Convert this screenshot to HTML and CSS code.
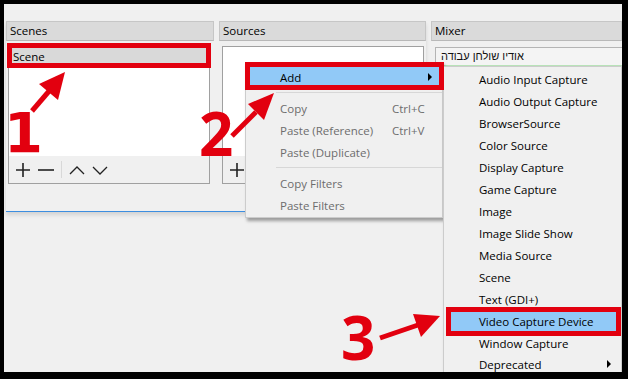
FILE: index.html
```html
<!DOCTYPE html>
<html lang="en">
<head>
    <meta charset="UTF-8">
    <title>OBS - Add Video Capture Device</title>
    <link rel="stylesheet" href="styles.css">
</head>
<body>
<div class="screen">
  <div class="window">
    <div class="docks">
      <div class="left-docks">
        <div class="dock dock-scenes">
          <div class="dock-title">Scenes</div>
          <div class="list">
            <div class="list-body">
              <div class="list-item selected">Scene</div>
            </div>
            <div class="toolbar">
              <svg class="tool" width="16" height="16" viewBox="0 0 16 16"><path d="M8 1v14M1 8h14" stroke="#222" stroke-width="1.6"/></svg>
              <svg class="tool" width="16" height="16" viewBox="0 0 16 16"><path d="M0 8h16" stroke="#222" stroke-width="1.6"/></svg>
              <span class="tool-sep"></span>
              <svg class="tool" width="16" height="16" viewBox="0 0 16 16"><path d="M1 12l7-7 7 7" fill="none" stroke="#222" stroke-width="1.3"/></svg>
              <svg class="tool" width="16" height="16" viewBox="0 0 16 16"><path d="M1 5l7 7 7-7" fill="none" stroke="#222" stroke-width="1.3"/></svg>
            </div>
          </div>
        </div>
        <div class="dock dock-sources">
          <div class="dock-title">Sources</div>
          <div class="list">
            <div class="list-body"></div>
            <div class="toolbar">
              <svg class="tool" width="16" height="16" viewBox="0 0 16 16"><path d="M8 1v14M1 8h14" stroke="#222" stroke-width="1.6"/></svg>
            </div>
          </div>
        </div>
      </div>
      <div class="dock dock-mixer">
        <div class="dock-title">Mixer</div>
        <div class="mixer-channel">
          <div class="mixer-name" dir="rtl">אודיו שולחן עבודה</div>
        </div>
      </div>
    </div>

    <div class="menu context-menu">
      <div class="menu-item active"><span>Add</span><span class="sub-arrow"></span></div>
      <div class="menu-sep"></div>
      <div class="menu-item disabled"><span>Copy</span><span class="shortcut">Ctrl+C</span></div>
      <div class="menu-item disabled"><span>Paste (Reference)</span><span class="shortcut">Ctrl+V</span></div>
      <div class="menu-item disabled"><span>Paste (Duplicate)</span></div>
      <div class="menu-sep"></div>
      <div class="menu-item disabled"><span>Copy Filters</span></div>
      <div class="menu-item disabled"><span>Paste Filters</span></div>
    </div>

    <div class="menu sub-menu">
      <div class="menu-item"><span>Audio Input Capture</span></div>
      <div class="menu-item"><span>Audio Output Capture</span></div>
      <div class="menu-item"><span>BrowserSource</span></div>
      <div class="menu-item"><span>Color Source</span></div>
      <div class="menu-item"><span>Display Capture</span></div>
      <div class="menu-item"><span>Game Capture</span></div>
      <div class="menu-item"><span>Image</span></div>
      <div class="menu-item"><span>Image Slide Show</span></div>
      <div class="menu-item"><span>Media Source</span></div>
      <div class="menu-item"><span>Scene</span></div>
      <div class="menu-item"><span>Text (GDI+)</span></div>
      <div class="menu-item active"><span>Video Capture Device</span></div>
      <div class="menu-item"><span>Window Capture</span></div>
      <div class="menu-item last"><span>Deprecated</span><span class="sub-arrow"></span></div>
    </div>
  </div>

  <!-- red tutorial marks on top of the screenshot -->
  <svg class="marks" width="628" height="379" viewBox="0 0 628 379">
    <g fill="none" stroke="#e2000f" stroke-width="5">
      <rect x="9.5" y="45.5" width="199" height="20"/>
      <rect x="247.5" y="64.5" width="194" height="23"/>
      <rect x="448.5" y="309.5" width="170" height="24"/>
    </g>
    <g stroke="#e2000f" stroke-width="5" stroke-linecap="butt">
      <line x1="32" y1="111" x2="50" y2="90"/>
      <line x1="232" y1="136" x2="256" y2="112"/>
      <line x1="380" y1="338" x2="418" y2="325"/>
    </g>
    <g fill="#e2000f">
      <polygon points="65,72 58,100 39,84"/>
      <polygon points="274,93 264,120 248,104"/>
      <polygon points="440,316 421,337 413,314"/>
    </g>
  </svg>
  <span class="mark-num num-1">1</span>
  <span class="mark-num num-2">2</span>
  <span class="mark-num num-3">3</span>
</div>
</body>
</html>
```

FILE: styles.css
```css
body {
    margin: 0;
    background-color: #000;
    font-family: "Open Sans", "Noto Sans", sans-serif;
    font-size: 11.5px;
    color: #000;
}
.screen {
    position: relative;
    width: 628px;
    height: 379px;
    background-color: #000;
    padding: 4px 6px 0 4px;
    box-sizing: border-box;
    overflow: hidden;
}
.window {
    position: relative;
    width: 618px;
    height: 368px;
    background-color: #f0f0f0;
    overflow: hidden;
}
.docks {
    display: flex;
    gap: 5px;
    padding: 17px 0 0 2px;
}
.left-docks {
    display: flex;
    gap: 5px;
    height: 190px;
    border-bottom: 1px solid #3d8ee0;
    box-shadow: 0 3px 4px rgba(0, 0, 0, 0.12);
}
.dock-scenes {
    width: 208px;
}
.dock-sources {
    width: 207px;
}
.dock-mixer {
    flex: 1;
}
.dock-title {
    height: 18px;
    line-height: 18px;
    padding-left: 3px;
    background-color: #dadada;
    border: 1px solid #c6c6c6;
    border-bottom-color: #b8b8b8;
}
.list {
    margin: 5px 0 0 2px;
    width: 200px;
    height: 136px;
    border: 1px solid #a0a0a0;
    background-color: #fff;
    display: flex;
    flex-direction: column;
}
.dock-sources .list {
    margin-left: 3px;
}
.list-body {
    flex: 1;
}
.list-item {
    height: 20px;
    line-height: 20px;
    padding-left: 4px;
}
.list-item.selected {
    background-color: #d9d9d9;
}
.toolbar {
    height: 27px;
    background-color: #f0f0f0;
    display: flex;
    align-items: center;
    gap: 7px;
    padding-left: 6px;
}
.tool-sep {
    width: 1px;
    height: 17px;
    background-color: #d8d8d8;
}
.mixer-channel {
    margin: 6px 0 0 4px;
    height: 17px;
    border: 1px solid #b4b4b4;
    border-right: none;
    border-bottom: 1px solid #b9e3b9;
    background-color: #f4f4f4;
}
.mixer-name {
    display: inline-block;
    font-family: "Liberation Sans", "DejaVu Sans", sans-serif;
    font-size: 11px;
    line-height: 17px;
    padding-left: 5px;
    color: #111;
}
.menu {
    position: absolute;
    background-color: #f0f0f0;
    border: 1px solid #cccccc;
    box-shadow: 2px 3px 3px rgba(0, 0, 0, 0.35);
}
.context-menu {
    left: 241px;
    top: 58px;
    width: 196px;
    padding: 3px 0 1px;
}
.sub-menu {
    left: 439px;
    top: 62px;
    width: 177px;
    padding: 1px 0 0;
}
.menu-item {
    height: 22px;
    margin: 0 2px;
    padding-left: 32px;
    padding-right: 8px;
    display: flex;
    align-items: center;
    justify-content: space-between;
}
.sub-menu .menu-item {
    padding-left: 33px;
}
.sub-menu .menu-item.last {
    height: 20px;
}
.menu-item.active {
    background-color: #91c9f7;
}
.menu-item.disabled {
    color: #6d6d6d;
}
.shortcut {
    width: 40px;
}
.sub-arrow {
    width: 0;
    height: 0;
    border-top: 4px solid transparent;
    border-bottom: 4px solid transparent;
    border-left: 4px solid #000;
}
.menu-sep {
    height: 1px;
    margin: 4px 0 4px 30px;
    background-color: #d7d7d7;
}
.marks {
    position: absolute;
    left: 0;
    top: 0;
}
.mark-num {
    position: absolute;
    font-family: "Open Sans", sans-serif;
    font-weight: 700;
    font-size: 60px;
    line-height: normal;
    color: #e2000f;
}
.num-1 {
    font-family: "DejaVu Sans", sans-serif;
    font-size: 56px;
    left: 4px;
    top: 100px;
}
.num-2 {
    left: 199px;
    top: 92px;
}
.num-3 {
    left: 341px;
    top: 296px;
}
```
